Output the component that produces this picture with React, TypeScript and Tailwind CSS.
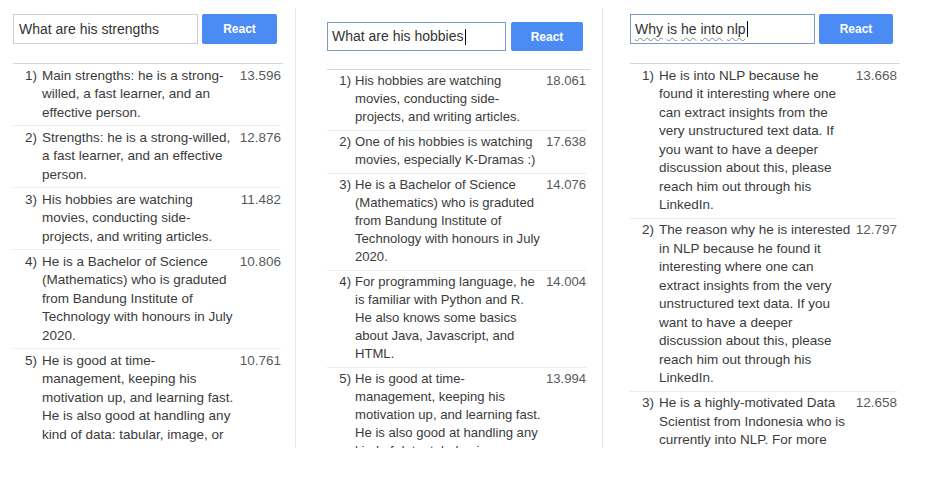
import React from "react";

type Item = { lines: string[]; score: string };

const p1: Item[] = [
  { lines: ["Main strengths: he is a strong-", "willed, a fast learner, and an", "effective person."], score: "13.596" },
  { lines: ["Strengths: he is a strong-willed,", "a fast learner, and an effective", "person."], score: "12.876" },
  { lines: ["His hobbies are watching", "movies, conducting side-", "projects, and writing articles."], score: "11.482" },
  { lines: ["He is a Bachelor of Science", "(Mathematics) who is graduted", "from Bandung Institute of", "Technology with honours in July", "2020."], score: "10.806" },
  { lines: ["He is good at time-", "management, keeping his", "motivation up, and learning fast.", "He is also good at handling any", "kind of data: tabular, image, or"], score: "10.761" },
];

const p2: Item[] = [
  { lines: ["His hobbies are watching", "movies, conducting side-", "projects, and writing articles."], score: "18.061" },
  { lines: ["One of his hobbies is watching", "movies, especially K-Dramas :)"], score: "17.638" },
  { lines: ["He is a Bachelor of Science", "(Mathematics) who is graduted", "from Bandung Institute of", "Technology with honours in July", "2020."], score: "14.076" },
  { lines: ["For programming language, he", "is familiar with Python and R.", "He also knows some basics", "about Java, Javascript, and", "HTML."], score: "14.004" },
  { lines: ["He is good at time-", "management, keeping his", "motivation up, and learning fast.", "He is also good at handling any", "kind of data: tabular, image, or"], score: "13.994" },
];

const p3: Item[] = [
  { lines: ["He is into NLP because he", "found it interesting where one", "can extract insights from the", "very unstructured text data. If", "you want to have a deeper", "discussion about this, please", "reach him out through his", "LinkedIn."], score: "13.668" },
  { lines: ["The reason why he is interested", "in NLP because he found it", "interesting where one can", "extract insights from the very", "unstructured text data. If you", "want to have a deeper", "discussion about this, please", "reach him out through his", "LinkedIn."], score: "12.797" },
  { lines: ["He is a highly-motivated Data", "Scientist from Indonesia who is", "currently into NLP. For more"], score: "12.658" },
];

function Row({ n, item, small }: { n: number; item: Item; small?: boolean }) {
  return (
    <div
      className={
        small
          ? "flex border-b border-[#ececec] last:border-b-0 pt-[2px] pb-[4px] leading-[18px]"
          : "flex border-b border-[#ececec] last:border-b-0 pt-[2.75px] pb-[2.75px] leading-[18.5px]"
      }
    >
      <div className="w-[24px] shrink-0 text-right">{n})</div>
      <div className={small ? "ml-[4px] w-[190px] shrink-0" : "ml-[5px] w-[196px] shrink-0"}>
        {item.lines.map((l, i) => (
          <div key={i} className="whitespace-nowrap">
            {l}
          </div>
        ))}
      </div>
      <div className="flex-1 text-right text-[#5a5a5a]">{item.score}</div>
    </div>
  );
}

const sq = "underline decoration-wavy decoration-[#8a8a8a] decoration-1 underline-offset-[3px]";

export default function App() {
  return (
    <div className="w-[927px] h-[485px] bg-white font-['Liberation_Sans',Arial,sans-serif] text-[#3b3b3b] overflow-hidden">
      <div className="flex mt-[8px] h-[440px]">
        {/* Panel 1 */}
        <div className="w-[296px] shrink-0 h-full overflow-hidden border-r border-[#e8e8e8] pl-[13px] pt-[6px]">
          <div className="flex gap-[4px] w-[264px]">
            <div className="w-[185px] h-[30px] border border-[#cfcfcf] px-[5px] flex items-center text-[14px] text-[#333]">
              What are his strengths
            </div>
            <div className="w-[75px] h-[30px] rounded-[2px] bg-[#4b8bf4] text-white font-bold text-[12px] flex items-center justify-center">
              React
            </div>
          </div>
          <div className="mt-[19px] w-[270px] border-t border-[#d8d8d8] text-[13.5px] pr-[2px]">
            {p1.map((it, i) => (
              <Row key={i} n={i + 1} item={it} />
            ))}
          </div>
        </div>

        {/* Panel 2 */}
        <div className="w-[307px] shrink-0 h-full overflow-hidden border-r border-[#e8e8e8] pl-[31px] pt-[14px]">
          <div className="flex gap-[5px]">
            <div className="w-[179px] h-[29px] border border-[#7c98c9] px-[4px] flex items-center text-[14px] text-[#333]">
              What are his hobbies
              <span className="inline-block w-[1px] h-[16px] bg-black ml-[1px]" />
            </div>
            <div className="w-[72px] h-[29px] rounded-[2px] bg-[#4b8bf4] text-white font-bold text-[12px] flex items-center justify-center">
              React
            </div>
          </div>
          <div className="mt-[18px] w-[263px] border-t border-[#d8d8d8] text-[13.1px] pr-[4px]">
            {p2.map((it, i) => (
              <Row key={i} n={i + 1} item={it} small />
            ))}
          </div>
        </div>

        {/* Panel 3 */}
        <div className="flex-1 h-full overflow-hidden pl-[27px] pt-[6px]">
          <div className="flex gap-[4px]">
            <div className="w-[185px] h-[30px] border border-[#7c98c9] px-[4px] flex items-center text-[14px] text-[#333]">
              <span className={sq}>Why</span>
              &nbsp;
              <span className={sq}>is</span>
              &nbsp;
              <span className={sq}>he</span>
              &nbsp;
              <span className={sq}>into</span>
              &nbsp;
              <span className={sq}>nlp</span>
              <span className="inline-block w-[1px] h-[16px] bg-black ml-[1px]" />
            </div>
            <div className="w-[74px] h-[30px] rounded-[2px] bg-[#4b8bf4] text-white font-bold text-[12px] flex items-center justify-center">
              React
            </div>
          </div>
          <div className="mt-[19px] w-[270px] border-t border-[#d8d8d8] text-[13.5px] pr-[3px]">
            {p3.map((it, i) => (
              <Row key={i} n={i + 1} item={it} />
            ))}
          </div>
        </div>
      </div>
    </div>
  );
}
